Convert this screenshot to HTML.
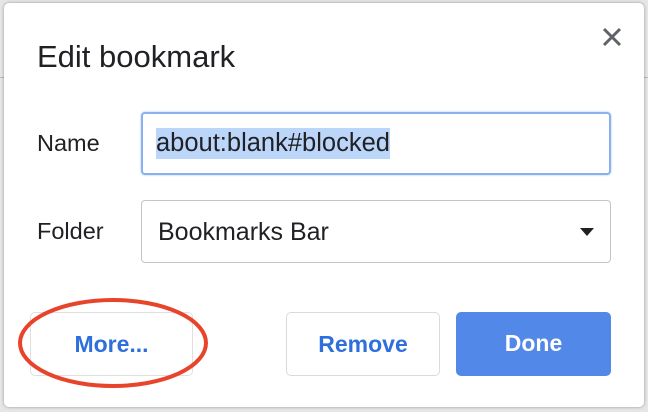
<!DOCTYPE html>
<html><head><style>
body{margin:0;width:648px;height:412px;background:#e6e6e6;position:relative;overflow:hidden;font-family:"Liberation Sans",Arial,sans-serif}
.line{position:absolute;top:77px;height:1px;background:#b8b8b8;width:648px;left:0}
.dlg{position:absolute;left:4px;top:3px;width:640px;height:404px;background:#fff;border-radius:5px;box-shadow:0 0 3px rgba(0,0,0,.35)}
.t{position:absolute;left:37px;top:39px;font-size:31px;line-height:36px;color:#202124}
.lab{position:absolute;left:37px;font-size:23.5px;line-height:28px;color:#202124}
.box{position:absolute;left:141px;width:470px;height:63px;border-radius:4px;box-sizing:border-box}
.btn{position:absolute;top:312px;height:64px;border-radius:5px;box-sizing:border-box;font-size:23px;color:#2f6fdc;text-align:center;line-height:62px;font-weight:bold}
</style></head><body>
<div class="line"></div>
<div class="dlg"></div>
<div class="t">Edit bookmark</div>
<svg style="position:absolute;left:601px;top:26px" width="22" height="22"><path d="M3 3L19 19M19 3L3 19" stroke="#5f6368" stroke-width="3"/></svg>
<div class="lab" style="top:129px">Name</div>
<div class="box" style="top:112px;border:2px solid #8ab0ee;box-shadow:0 0 2px #aac6f2"></div>
<div style="position:absolute;left:156px;top:128px;height:31px;background:#bcd6fa;font-size:25.5px;line-height:31px;color:#202124">about:blank#blocked</div>
<div class="lab" style="top:217px">Folder</div>
<div class="box" style="top:200px;border:1px solid #c4c4c4"></div>
<div style="position:absolute;left:158px;top:217px;font-size:25px;line-height:30px;color:#202124">Bookmarks Bar</div>
<svg style="position:absolute;left:580px;top:228px" width="14" height="8"><path d="M0 0H14L7 8Z" fill="#202124"/></svg>
<div class="btn" style="left:30px;width:163px;border:1px solid #e0e0e0">More...</div>
<div class="btn" style="left:286px;width:154px;border:1px solid #dadada">Remove</div>
<div class="btn" style="left:456px;width:155px;background:#5289e9;color:#fff">Done</div>
<svg style="position:absolute;left:0;top:280px" width="230" height="132"><ellipse cx="113" cy="63" rx="93" ry="43" fill="none" stroke="#e8432b" stroke-width="4"/></svg>
</body></html>
